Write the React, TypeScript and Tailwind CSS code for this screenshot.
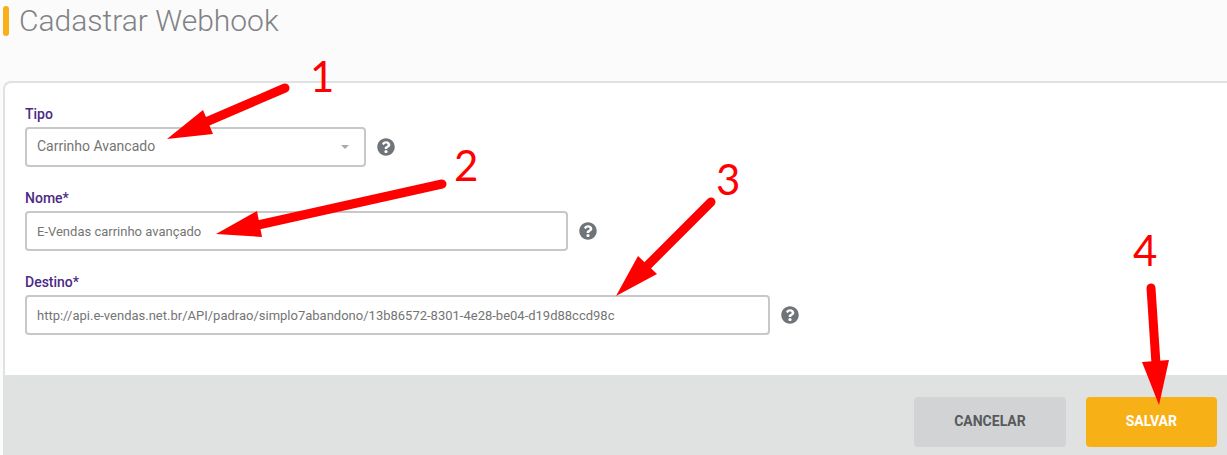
import { FaQuestionCircle } from 'react-icons/fa'

type Step = {
  label: string
  x: number
  y: number
  tail: [number, number]
  neck: [number, number]
  head: string
}

const steps: Step[] = [
  { label: '1', x: 310, y: 92, tail: [285, 88], neck: [206, 122], head: '167,139 203,110 213,134' },
  { label: '2', x: 454, y: 181, tail: [442, 184], neck: [258, 225], head: '216,234 257,211 262,237' },
  { label: '3', x: 716, y: 195, tail: [711, 202], neck: [646, 267], head: '616,296 638,256 657,274' },
  { label: '4', x: 1133, y: 266, tail: [1151, 288], neck: [1156, 364], head: '1159,405 1142,362 1169,360' },
]

const control =
  'h-10 w-full rounded border-2 border-[#c8c8c8] bg-white px-2.5 text-[#757575] outline-none focus:border-[#4b2a86]'

function Help({ topic }: { topic: string }) {
  return (
    <button type="button" aria-label={`Ajuda: ${topic}`} className="shrink-0 text-lg text-[#6f7479]">
      <FaQuestionCircle />
    </button>
  )
}

function FieldLabel({ id, text }: { id: string; text: string }) {
  return (
    <label htmlFor={id} className="mb-[3px] block text-sm font-medium text-[#4b2a86]">
      {text}
    </label>
  )
}

/* Numbered walkthrough drawn on top of the form */
function Walkthrough() {
  return (
    <svg
      aria-hidden="true"
      width="1227"
      height="455"
      viewBox="0 0 1227 455"
      className="pointer-events-none absolute top-0 left-0"
    >
      {steps.map((s) => (
        <g key={s.label} fill="#ff0000">
          <line
            x1={s.tail[0]}
            y1={s.tail[1]}
            x2={s.neck[0]}
            y2={s.neck[1]}
            stroke="#ff0000"
            strokeWidth="9"
            strokeLinecap="round"
          />
          <polygon points={s.head} />
          <text x={s.x} y={s.y} className="font-['Lato',sans-serif] text-[42px]">
            {s.label}
          </text>
        </g>
      ))}
    </svg>
  )
}

export default function App() {
  return (
    <div className="relative min-h-screen overflow-hidden bg-[#fbfbfb] pl-[3px] font-['Roboto',sans-serif]">
      <header className="flex h-[81px] items-start gap-2.5 pt-1.5">
        <span className="h-[30px] w-1.5 rounded-sm bg-[#f9af18]" />
        <h1 className="text-[30px] leading-[30px] font-light text-[#808285]">Cadastrar Webhook</h1>
      </header>

      <form
        className="rounded-tl-lg border-t-2 border-l-2 border-[#e0e2e1] bg-white"
        onSubmit={(e) => e.preventDefault()}
      >
        <div className="flex flex-col gap-[21px] px-5 pt-[21px] pb-10">
          <div>
            <FieldLabel id="tipo" text="Tipo" />
            <div className="flex items-center gap-[11px]">
              <div className="relative w-full max-w-[341px]">
                <select id="tipo" defaultValue="avancado" className={`${control} appearance-none pb-0.5 text-sm`}>
                  <option value="avancado">Carrinho Avancado</option>
                </select>
                <svg
                  aria-hidden="true"
                  viewBox="0 0 8 4"
                  className="pointer-events-none absolute top-[18px] right-[17px] h-1 w-2 fill-[#aaaaaa]"
                >
                  <path d="M0 0h8L4 4z" />
                </svg>
              </div>
              <Help topic="Tipo" />
            </div>
          </div>

          <div>
            <FieldLabel id="nome" text="Nome*" />
            <div className="flex items-center gap-[11px]">
              <input
                id="nome"
                type="text"
                defaultValue="E-Vendas carrinho avançado"
                className={`${control} max-w-[543px] text-[13px]`}
              />
              <Help topic="Nome" />
            </div>
          </div>

          <div>
            <FieldLabel id="destino" text="Destino*" />
            <div className="flex items-center gap-[11px]">
              <input
                id="destino"
                type="text"
                defaultValue="http://api.e-vendas.net.br/API/padrao/simplo7abandono/13b86572-8301-4e28-be04-d19d88ccd98c"
                className={`${control} max-w-[745px] text-[13px]`}
              />
              <Help topic="Destino" />
            </div>
          </div>
        </div>

        <footer className="flex justify-end gap-5 bg-[#e0e2e1] pt-[22px] pr-2.5 pb-2 text-sm">
          <button type="button" className="h-[50px] rounded bg-[#d1d3d5] px-10 pb-0.5 font-bold text-[#58595b]">
            CANCELAR
          </button>
          <button type="submit" className="h-[50px] rounded bg-[#f8b017] px-10 pb-0.5 font-bold text-white">
            SALVAR
          </button>
        </footer>
      </form>

      <Walkthrough />
    </div>
  )
}
